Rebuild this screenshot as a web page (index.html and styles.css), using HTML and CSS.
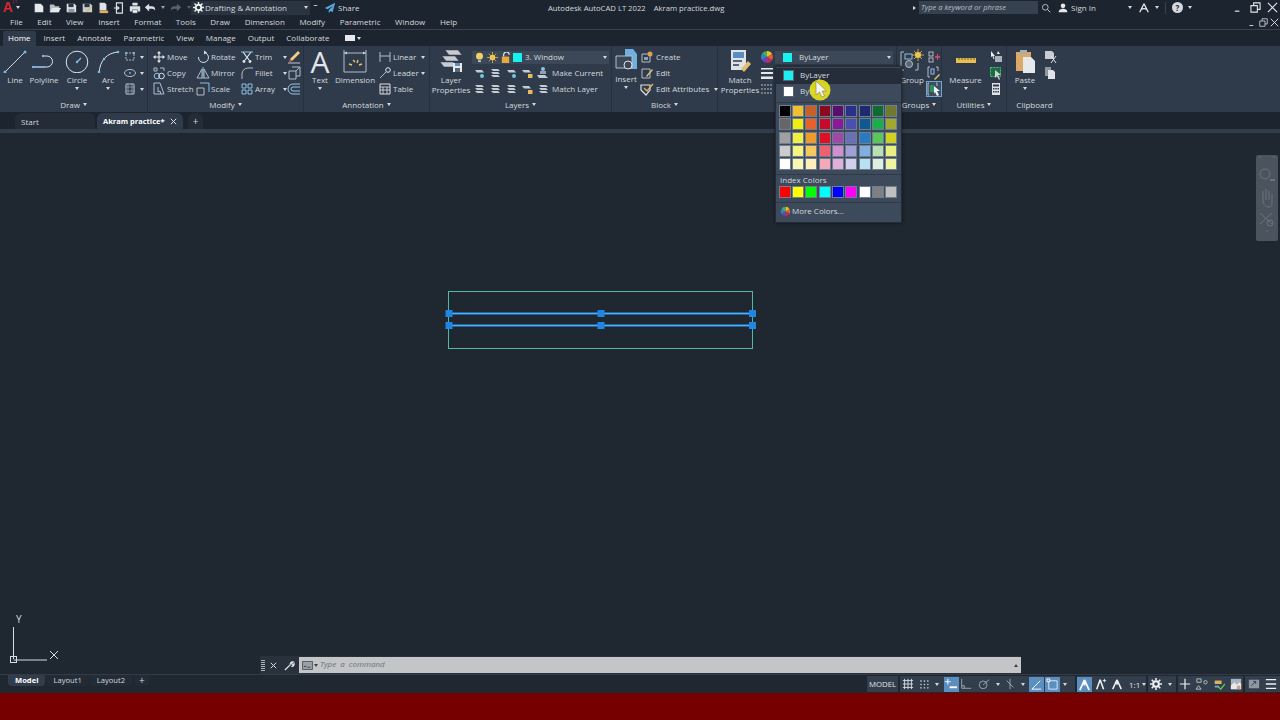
FILE: index.html
```html
<!DOCTYPE html>
<html lang="en">
<head>
<meta charset="utf-8">
<title>Autodesk AutoCAD LT 2022</title>
<link rel="stylesheet" href="styles.css">
</head>
<body>
<svg class="defs" width="0" height="0" aria-hidden="true">
  <symbol id="dot3" viewBox="0 0 14 14"><path d="M3 3h8v7H3z" fill="none" stroke="#aab2bc" stroke-dasharray="2 1"/><path d="M2 2h2v2H2zM10 2h2v2h-2z" fill="#6fb0e0"/></symbol>
  <symbol id="ellipse" viewBox="0 0 14 14"><ellipse cx="7" cy="7" rx="5.500" ry="3.500" fill="none" stroke="#b5bcc4"/><circle cx="7" cy="7" r="1" fill="#6fb0e0"/></symbol>
  <symbol id="hatch" viewBox="0 0 14 14"><path d="M3 2h8v10H3z" fill="none" stroke="#b5bcc4"/><path d="M5 1v12M9 1v12M2 5h10M2 9h10" stroke="#98a1ac" stroke-width=".8"/></symbol>
  <symbol id="move" viewBox="0 0 14 14"><path d="M7 2v10M2 7h10" stroke="#e6e9ec" stroke-width="1.100"/><path d="M7 1l2 2.500H5zM7 13l2-2.500H5zM1 7l2.500-2v4zM13 7l-2.500-2v4z" fill="#e6e9ec"/></symbol>
  <symbol id="copy" viewBox="0 0 14 14"><circle cx="5" cy="10" r="2.800" fill="none" stroke="#8fc0e8"/><circle cx="9.500" cy="10" r="2.800" fill="none" stroke="#d8dde2"/><path d="M2 2h3v3H2zM8 2h4v3" fill="none" stroke="#b5bcc4"/></symbol>
  <symbol id="stretch" viewBox="0 0 14 14"><path d="M2 1h6l4 11H2z" fill="none" stroke="#b5bcc4"/><path d="M6 5v5l2-1 1 3" fill="none" stroke="#8fc0e8"/></symbol>
  <symbol id="rotate" viewBox="0 0 14 14"><path d="M8 2.500a5 5 0 1 1-5.500 4.500" fill="none" stroke="#d8dde2"/><path d="M8 .5l3 2-3 2z" fill="#d8dde2"/></symbol>
  <symbol id="mirror" viewBox="0 0 14 14"><path d="M6 3L1 12h5zM8 3l5 9H8z" fill="none" stroke="#b5bcc4"/><path d="M7 1v12" stroke="#8fc0e8"/></symbol>
  <symbol id="scale" viewBox="0 0 14 14"><path d="M1 6h7v7H1z" fill="none" stroke="#b5bcc4"/><path d="M4 1h9v9" fill="none" stroke="#8fc0e8"/></symbol>
  <symbol id="trim" viewBox="0 0 14 14"><path d="M3 2l6 8M11 2L5 10" stroke="#e6e9ec" stroke-width="1.200"/><circle cx="4" cy="11.500" r="1.400" fill="#e6e9ec"/><circle cx="10" cy="11.500" r="1.400" fill="#e6e9ec"/><path d="M1 2h12" stroke="#8fc0e8"/></symbol>
  <symbol id="fillet" viewBox="0 0 14 14"><path d="M2 13V8a6 6 0 0 1 6-6h5" fill="none" stroke="#b5bcc4"/></symbol>
  <symbol id="array" viewBox="0 0 14 14"><path d="M2 2h4v4H2zM8 2h4v4H8zM2 8h4v4H2zM8 8h4v4H8z" fill="none" stroke="#8fc0e8"/></symbol>
  <symbol id="erase" viewBox="0 0 14 14"><path d="M3 9l8-8 2 2-8 8z" fill="#f0d080"/><path d="M3 9l2 2-3 1z" fill="#e06060"/><path d="M1 13h12" stroke="#c8c8c8"/></symbol>
  <symbol id="explode" viewBox="0 0 14 14"><path d="M2 5h7v8H2zM5 1h8v9h-4" fill="none" stroke="#b5bcc4"/><path d="M9 5l4-4" stroke="#8fc0e8"/></symbol>
  <symbol id="offset" viewBox="0 0 14 14"><path d="M13 2H6a5 5 0 0 0 0 10h7M13 5H6a2 2 0 0 0 0 4h7" fill="none" stroke="#9ac4e6"/></symbol>
  <symbol id="linear" viewBox="0 0 14 14"><path d="M2 2v10M12 2v10M2 6h10" fill="none" stroke="#b5bcc4"/></symbol>
  <symbol id="leader" viewBox="0 0 14 14"><path d="M2 12l6-6" stroke="#b5bcc4"/><circle cx="10" cy="4" r="2.300" fill="none" stroke="#e6e9ec"/></symbol>
  <symbol id="table" viewBox="0 0 14 14"><path d="M2 2h10v10H2z" fill="none" stroke="#dfe3e8"/><path d="M2 5h10M2 8h10M5 5v7M9 5v7" stroke="#dfe3e8" stroke-width=".8"/></symbol>
  <symbol id="lyr-a" viewBox="0 0 14 14"><path d="M3 4h7l2 2.500H5z" fill="#c5cbd2"/><circle cx="10" cy="10" r="2" fill="#6fc8e0"/></symbol>
  <symbol id="lyr-b" viewBox="0 0 14 14"><path d="M3 3h7l2 2H5zM3 6h7l2 2H5zM3 9h7l2 2H5z" fill="#c5cbd2"/></symbol>
  <symbol id="lyr-c" viewBox="0 0 14 14"><path d="M2 4h7l2 2.500H4z" fill="#c5cbd2"/><rect x="8" y="8" width="4.500" height="4" fill="#e8b860"/></symbol>
  <symbol id="lyr-d" viewBox="0 0 14 14"><path d="M1 9h8l3 3H3z" fill="#c5cbd2"/><circle cx="7" cy="3" r="2" fill="#8fc0e8"/><path d="M4 5h6v3H4z" fill="#8fa0b4"/></symbol>
  <symbol id="create" viewBox="0 0 14 14"><path d="M2 4h8v8H2z" fill="none" stroke="#b5bcc4"/><circle cx="10" cy="4" r="2.500" fill="#e0a050"/><path d="M4 7h4v3H4z" fill="#8fa0b4"/></symbol>
  <symbol id="edit" viewBox="0 0 14 14"><path d="M2 3h8v9H2z" fill="none" stroke="#b5bcc4"/><path d="M6 10l6-7 1 1-6 7z" fill="#e0c070"/></symbol>
  <symbol id="attr" viewBox="0 0 14 14"><path d="M1 3h9v5l-4 5-5-5z" fill="none" stroke="#dfe3e8" stroke-width="1.200"/><path d="M4 6l3 3 6-7" fill="none" stroke="#e0b060" stroke-width="1.400"/></symbol>
  <symbol id="wheel" viewBox="0 0 14 14"><path d="M7 7V1a6 6 0 0 1 5.200 3z" fill="#e8c030"/><path d="M7 7l5.200-3a6 6 0 0 1 0 6z" fill="#e06030"/><path d="M7 7l5.200 3A6 6 0 0 1 7 13z" fill="#c02a60"/><path d="M7 7v6a6 6 0 0 1-5.200-3z" fill="#7040b0"/><path d="M7 7L1.800 10a6 6 0 0 1 0-6z" fill="#3080d0"/><path d="M7 7L1.800 4A6 6 0 0 1 7 1z" fill="#40b060"/></symbol>
  <symbol id="lweight" viewBox="0 0 14 14"><path d="M1 2h12v1.500H1zM1 6h12v2H1zM1 10.500h12V13H1z" fill="#e6e9ec"/></symbol>
  <symbol id="ltype" viewBox="0 0 14 14"><path d="M1 3h12M1 7h12M1 11h12" stroke="#b5bcc4" stroke-dasharray="2 1"/></symbol>
  <symbol id="grp-a" viewBox="0 0 14 14"><rect x="2" y="2" width="4" height="4" fill="none" stroke="#b5bcc4"/><rect x="2" y="8" width="4" height="4" fill="none" stroke="#b5bcc4"/><path d="M8 7h5" stroke="#e05070" stroke-width="1.500"/><path d="M10.500 4v6" stroke="#e05070"/></symbol>
  <symbol id="grp-b" viewBox="0 0 14 14"><path d="M3 1H1v10h2M9 1h2v4" fill="none" stroke="#b5bcc4"/><rect x="4" y="3" width="3" height="5" fill="none" stroke="#8fc0e8"/><path d="M7 13l5-5 1 1-5 5z" fill="#e0c070"/></symbol>
  <symbol id="grp-c" viewBox="0 0 14 14"><path d="M2 1H1v12h1M9 1h1v3" fill="none" stroke="#b5bcc4"/><rect x="3" y="3" width="4" height="7" fill="#2a9060"/><path d="M7 4l6 5-3 0 2 4-2 1-2-4-1 2z" fill="#eef0f2"/></symbol>
  <symbol id="util-a" viewBox="0 0 14 14"><path d="M2 1l4 5H4.500l1 3h-1l-1-3-1.500 1z" fill="#eef0f2"/><path d="M6 6h7v6H6z" fill="#aab2bc"/><path d="M9 1l2 3H8z" fill="#eef0f2"/></symbol>
  <symbol id="util-b" viewBox="0 0 14 14"><rect x="1.500" y="1.500" width="10" height="9" fill="#1d6b40" stroke="#50c080" stroke-dasharray="2 1"/><path d="M6 4l6 5-3 0 2 4-1 1-2-4-2 2z" fill="#cfd4da"/></symbol>
  <symbol id="calc" viewBox="0 0 14 14"><rect x="3" y="1" width="8" height="12" fill="#dfe3e8"/><rect x="4" y="2.500" width="6" height="2" fill="#2f3b4a"/><path d="M4 6h1.500v1.500H4zM6.300 6h1.500v1.500H6.300zM8.500 6H10v1.500H8.500zM4 9h1.500v1.500H4zM6.300 9h1.500v1.500H6.300zM8.500 9H10v1.500H8.500z" fill="#2f3b4a"/></symbol>
  <symbol id="cut" viewBox="0 0 14 14"><path d="M2 1h7l2 2v6H2z" fill="#c8ccd2"/><path d="M8 6l5 7M13 6l-5 7" stroke="#dfe3e8"/></symbol>
  <symbol id="pcopy" viewBox="0 0 14 14"><path d="M2 1h6v9H2z" fill="#8f98a2"/><path d="M5 4h5l2 2v7H5z" fill="#dfe3e8"/></symbol>
</svg>

<div class="app">
  <header class="titlebar">
    <div class="tb-left">
      <span class="logo">A<i class="logo-lt">LT</i></span>
      <span class="caret logo-caret"></span>
      <div class="qat">
        <svg viewBox="0 0 14 14"><path d="M2 2h7l3 3v7H2z" fill="#e6e9ec"/></svg>
        <svg viewBox="0 0 14 14"><path d="M1 3h5l1 2h5v7H1z" fill="#b8bec6"/><path d="M4 7h10l-3 5H1z" fill="#e6e9ec"/></svg>
        <svg viewBox="0 0 14 14"><path d="M2 2h9l2 2v8H2z" fill="#dfe3e8"/><path d="M4 2h6v4H4z" fill="#2a3441"/><path d="M4 8h7v4H4z" fill="#8f98a2"/></svg>
        <svg viewBox="0 0 14 14"><path d="M2 2h9l2 2v8H2z" fill="#c8ccd2"/><path d="M4 2h6v4H4z" fill="#2a3441"/><path d="M6 11l6-6 1 1-6 6z" fill="#e0b060"/></svg>
        <svg viewBox="0 0 14 14"><path d="M3 1h6l2 2v7H3z" fill="#dfe3e8"/><path d="M3 10h10v3H3z" fill="#e0b060"/></svg>
        <svg viewBox="0 0 14 14"><path d="M4 1h7v12H4z" fill="none" stroke="#dfe3e8" stroke-width="1.300"/><path d="M1 7h6M5 5l2 2-2 2" fill="none" stroke="#dfe3e8" stroke-width="1.300"/></svg>
        <svg viewBox="0 0 14 14"><path d="M4 1h6v3H4zM1 5h12v6H1z" fill="#dfe3e8"/><path d="M4 9h6v4H4z" fill="#eef0f2" stroke="#2a3441" stroke-width=".6"/></svg>
      </div>
      <svg class="undo" viewBox="0 0 14 14"><path d="M1 6l5-4v3h3a4 4 0 0 1 4 4v1a4 3 0 0 0-4-2H6v3z" fill="#dfe3e8"/></svg>
      <span class="caret undo-caret"></span>
      <svg class="redo" viewBox="0 0 14 14"><path d="M13 6L8 2v3H5a4 4 0 0 0-4 4v1a4 3 0 0 1 4-2h3v3z" fill="#59616c"/></svg>
      <span class="caret redo-caret"></span>
      <div class="workspace">
        <svg class="gear" viewBox="0 0 14 14"><circle cx="7" cy="7" r="3.500" fill="none" stroke="#eef0f2" stroke-width="2.400"/><path d="M7 0v3M7 11v3M0 7h3M11 7h3M2 2l2 2M10 10l2 2M12 2l-2 2M4 10l-2 2" stroke="#eef0f2" stroke-width="1.800"/></svg>
        <span class="ws-label">Drafting &amp; Annotation</span>
        <span class="caret ws-caret"></span>
      </div>
      <span class="menu-caret"></span>
      <svg class="share" viewBox="0 0 14 14"><path d="M13 1L1 7l3 1.500L11 4 5.500 9.500V13l2-2.500L10 12z" fill="#59a9e0"/></svg>
      <span class="share-label">Share</span>
    </div>
    <div class="app-title">Autodesk AutoCAD LT 2022&nbsp;&nbsp;&nbsp;&nbsp;Akram practice.dwg</div>
    <div class="tb-right">
      <span class="tri-right"></span>
      <div class="search">Type a keyword or phrase</div>
      <svg class="tb-icon" viewBox="0 0 14 14"><circle cx="6" cy="6" r="4" fill="none" stroke="#c5cbd2" stroke-width="1.200"/><path d="M9 9l4 4" stroke="#c5cbd2" stroke-width="1.400"/></svg>
      <svg class="tb-icon user" viewBox="0 0 14 14"><circle cx="7" cy="4" r="3.200" fill="#e6e9ec"/><path d="M1 13c0-4 3-5 6-5s6 1 6 5z" fill="#e6e9ec"/></svg>
      <span class="signin">Sign In</span>
      <span class="caret signin-caret"></span>
      <svg class="tb-icon a360" viewBox="0 0 14 14"><path d="M7 1L1 13M7 1l6 12M3 9c3-1.500 5-1.500 8 0" fill="none" stroke="#e6e9ec" stroke-width="1.800"/></svg>
      <span class="caret"></span>
      <span class="tb-sep"></span>
      <span class="help">?</span>
      <span class="caret help-caret"></span>
      <div class="win-btns">
        <svg viewBox="0 0 12 12"><path d="M2 10h5" stroke="#dfe3e8" stroke-width="1.300"/></svg>
        <svg viewBox="0 0 12 12"><path d="M1 4h7v7H1zM4 4V1h7v7H8" fill="none" stroke="#dfe3e8" stroke-width="1.200"/></svg>
        <svg viewBox="0 0 12 12"><path d="M1 1l10 10M11 1L1 11" stroke="#e6e9ec" stroke-width="1.200"/></svg>
      </div>
    </div>
  </header>

  <nav class="menubar">
    <div class="menu-items">
      <span>File</span><span>Edit</span><span>View</span><span>Insert</span><span>Format</span><span>Tools</span><span>Draw</span><span>Dimension</span><span>Modify</span><span>Parametric</span><span>Window</span><span>Help</span>
    </div>
    <div class="doc-btns">
      <svg viewBox="0 0 12 12"><path d="M2 10h5" stroke="#dfe3e8" stroke-width="1.200"/></svg>
      <svg viewBox="0 0 12 12"><path d="M1 4h7v7H1zM4 4V1h7v7H8" fill="none" stroke="#dfe3e8"/></svg>
      <svg viewBox="0 0 12 12"><path d="M1 1l10 10M11 1L1 11" stroke="#e6e9ec" stroke-width="1.200"/></svg>
    </div>
  </nav>

  <div class="ribbon-tabs">
    <span class="rtab active">Home</span><span class="rtab">Insert</span><span class="rtab">Annotate</span><span class="rtab">Parametric</span><span class="rtab">View</span><span class="rtab">Manage</span><span class="rtab">Output</span><span class="rtab">Collaborate</span>
    <span class="mini"></span><span class="caret mini-caret"></span>
  </div>

  <section class="ribbon">
    <!-- Draw -->
    <div class="panel p-draw">
      <div class="tools">
        <div class="big w30"><svg viewBox="0 0 24 24"><path d="M2 23L22 3" stroke="#cfd4da"/><circle cx="2" cy="23" r="1.500" fill="#7fb8e6"/><circle cx="22" cy="3" r="1.500" fill="#7fb8e6"/></svg><span>Line</span></div>
        <div class="big w28"><svg viewBox="0 0 24 24"><path d="M1 18h14a5.500 5.500 0 0 0 0-11h-4" fill="none" stroke="#dfe3e8"/><path d="M1 18h12" stroke="#7fb8e6" stroke-width="1.400"/><circle cx="1" cy="18" r="1.200" fill="#7fb8e6"/><circle cx="11" cy="7" r="1.200" fill="#7fb8e6"/></svg><span>Polyline</span></div>
        <div class="big w38"><svg viewBox="0 0 24 24"><circle cx="12" cy="13" r="10.800" fill="none" stroke="#dfe3e8"/><path d="M12 13l4-4" stroke="#7fb8e6" stroke-width="1.400"/><circle cx="12" cy="13" r="1.200" fill="#7fb8e6"/></svg><span>Circle</span><span class="caret down"></span></div>
        <div class="big w24"><svg viewBox="0 0 24 24"><path d="M3 24C4 11 11 4 22 3" fill="none" stroke="#dfe3e8"/><circle cx="3" cy="23" r="1.300" fill="#7fb8e6"/><circle cx="8" cy="10" r="1.300" fill="#7fb8e6"/><circle cx="22" cy="3" r="1.300" fill="#7fb8e6"/></svg><span>Arc</span><span class="caret down"></span></div>
        <div class="col c-draw">
          <div class="row"><svg class="ico"><use href="#dot3"/></svg><span class="caret tight"></span></div>
          <div class="row"><svg class="ico"><use href="#ellipse"/></svg><span class="caret tight"></span></div>
          <div class="row"><svg class="ico"><use href="#hatch"/></svg><span class="caret tight"></span></div>
        </div>
      </div>
      <div class="ptitle">Draw<span class="caret"></span></div>
    </div>
    <!-- Modify -->
    <div class="panel p-modify">
      <div class="tools">
        <div class="col w44">
          <div class="row"><svg class="ico"><use href="#move"/></svg><span>Move</span></div>
          <div class="row"><svg class="ico"><use href="#copy"/></svg><span>Copy</span></div>
          <div class="row"><svg class="ico"><use href="#stretch"/></svg><span>Stretch</span></div>
        </div>
        <div class="col w44">
          <div class="row"><svg class="ico"><use href="#rotate"/></svg><span>Rotate</span></div>
          <div class="row"><svg class="ico"><use href="#mirror"/></svg><span>Mirror</span></div>
          <div class="row"><svg class="ico"><use href="#scale"/></svg><span>Scale</span></div>
        </div>
        <div class="col w47">
          <div class="row"><svg class="ico"><use href="#trim"/></svg><span>Trim</span><span class="caret push"></span></div>
          <div class="row"><svg class="ico"><use href="#fillet"/></svg><span>Fillet</span><span class="caret push"></span></div>
          <div class="row"><svg class="ico"><use href="#array"/></svg><span>Array</span><span class="caret push"></span></div>
        </div>
        <div class="col">
          <div class="row"><svg class="ico"><use href="#erase"/></svg></div>
          <div class="row"><svg class="ico"><use href="#explode"/></svg></div>
          <div class="row"><svg class="ico"><use href="#offset"/></svg></div>
        </div>
      </div>
      <div class="ptitle">Modify<span class="caret"></span></div>
    </div>
    <!-- Annotation -->
    <div class="panel p-annot">
      <div class="tools">
        <div class="big w32"><span class="glyph-a">A</span><span>Text</span><span class="caret down"></span></div>
        <div class="big w38"><svg viewBox="0 0 24 24"><path d="M1 1v22M23 1v22M1 4h22M1 23h22" fill="none" stroke="#b5bcc4"/><path d="M1 4l3-1.500v3zM23 4l-3-1.500v3z" fill="#c5cbd2"/><path d="M6 15l3 1M10 11l2 2M15 11l-1 3M19 15l-3 1" stroke="#e8c860" stroke-width="1.400"/></svg><span>Dimension</span></div>
        <div class="col c-annot">
          <div class="row"><svg class="ico"><use href="#linear"/></svg><span>Linear</span><span class="caret push"></span></div>
          <div class="row"><svg class="ico"><use href="#leader"/></svg><span>Leader</span><span class="caret push"></span></div>
          <div class="row"><svg class="ico"><use href="#table"/></svg><span>Table</span></div>
        </div>
      </div>
      <div class="ptitle">Annotation<span class="caret"></span></div>
    </div>
    <!-- Layers -->
    <div class="panel p-layers">
      <div class="tools">
        <div class="big w42"><svg viewBox="0 0 24 24"><path d="M6 1h13l4 5H10zM3 7h13l4 5H7zM1 13h13l4 5H5z" fill="#c8ccd2" stroke="#2f3b4a" stroke-width=".5"/><path d="M14 14h9v9h-9z" fill="#e6e9ec"/><path d="M16 14h5v3h-5z" fill="#5a8ec0"/><path d="M16 19h5v4h-5z" fill="#5a6472"/></svg><span>Layer<br>Properties</span></div>
        <div class="col c-layers">
          <div class="row combo layer-combo">
            <svg class="ico-s" viewBox="0 0 12 12"><circle cx="6" cy="4.500" r="3.800" fill="#f0d060"/><path d="M4.500 9h3v2h-3z" fill="#c8ccd2"/></svg>
            <svg class="ico-s" viewBox="0 0 12 12"><circle cx="6" cy="6" r="3" fill="#f0d060"/><path d="M6 0v12M0 6h12M2 2l8 8M10 2l-8 8" stroke="#f0c040" stroke-width=".8"/></svg>
            <svg class="ico-s" viewBox="0 0 12 12"><path d="M2 5h8v7H2z" fill="#e8a840"/><path d="M4 5V3a3 3 0 0 1 6 0" fill="none" stroke="#e6e9ec" stroke-width="1.300"/></svg>
            <span class="swatch cyan"></span>
            <span class="combo-label">3. Window</span>
            <span class="caret push"></span>
          </div>
          <div class="row layer-row">
            <svg class="ico"><use href="#lyr-a"/></svg><svg class="ico"><use href="#lyr-b"/></svg><svg class="ico"><use href="#lyr-a"/></svg><svg class="ico"><use href="#lyr-c"/></svg><svg class="ico"><use href="#lyr-d"/></svg>
            <span class="lr-label">Make Current</span>
          </div>
          <div class="row layer-row">
            <svg class="ico"><use href="#lyr-b"/></svg><svg class="ico"><use href="#lyr-b"/></svg><svg class="ico"><use href="#lyr-b"/></svg><svg class="ico"><use href="#lyr-c"/></svg><svg class="ico"><use href="#lyr-b"/></svg>
            <span class="lr-label">Match Layer</span>
          </div>
        </div>
      </div>
      <div class="ptitle">Layers<span class="caret"></span></div>
    </div>
    <!-- Block -->
    <div class="panel p-block">
      <div class="tools">
        <div class="big w28 insert"><svg viewBox="0 0 24 24"><path d="M11 0h8l4 5v15H11z" fill="#6fb0e0"/><path d="M2 7h16v12H2z" fill="#3a4756" stroke="#b5bcc4"/><circle cx="14" cy="16" r="4" fill="#3a4756" stroke="#dfe3e8"/></svg><span>Insert</span><span class="caret down"></span></div>
        <div class="col">
          <div class="row"><svg class="ico"><use href="#create"/></svg><span class="bl">Create</span></div>
          <div class="row"><svg class="ico"><use href="#edit"/></svg><span class="bl">Edit</span></div>
          <div class="row"><svg class="ico"><use href="#attr"/></svg><span class="bl">Edit Attributes</span><span class="caret attr-caret"></span></div>
        </div>
      </div>
      <div class="ptitle">Block<span class="caret"></span></div>
    </div>
    <!-- Properties -->
    <div class="panel p-props">
      <div class="tools">
        <div class="big w44"><svg viewBox="0 0 24 24"><path d="M3 1h15v20H3z" fill="#dfe3e8"/><path d="M5 3h11v6H5z" fill="#5a8ec0"/><path d="M5 11h9v2H5zM5 15h6v2H5z" fill="#5a6472"/><path d="M13 20l7-8 3 3-7 8z" fill="#e0c070"/></svg><span>Match<br>Properties</span></div>
        <div class="col c-wheel">
          <div class="row"><svg class="ico"><use href="#wheel"/></svg></div>
          <div class="row"><svg class="ico"><use href="#lweight"/></svg></div>
          <div class="row"><svg class="ico"><use href="#ltype"/></svg></div>
        </div>
        <div class="col c-propcombo">
          <div class="row combo color-combo"><span class="swatch cyan"></span><span class="combo-text">ByLayer</span><span class="caret push"></span></div>
        </div>
      </div>
      <div class="ptitle">Properties<span class="caret"></span></div>
    </div>
    <!-- Groups -->
    <div class="panel p-groups">
      <div class="tools">
        <div class="big w26"><svg viewBox="0 0 24 24"><path d="M4 3H1v18h3M18 14v7h-3" fill="none" stroke="#b5bcc4"/><rect x="5" y="5" width="7" height="5" fill="none" stroke="#8fc0e8"/><circle cx="9" cy="15" r="3.500" fill="#5a6472" stroke="#b5bcc4"/><circle cx="18" cy="6" r="3" fill="#f0d060"/><path d="M18 0v12M12 6h12M14 2l8 8M22 2l-8 8" stroke="#f0c040" stroke-width=".8"/></svg><span>Group</span></div>
        <div class="col c-grp">
          <div class="row"><svg class="ico"><use href="#grp-a"/></svg></div>
          <div class="row"><svg class="ico"><use href="#grp-b"/></svg></div>
          <div class="row"><span class="grp-active"><svg class="ico"><use href="#grp-c"/></svg></span></div>
        </div>
      </div>
      <div class="ptitle">Groups<span class="caret"></span></div>
    </div>
    <!-- Utilities -->
    <div class="panel p-util">
      <div class="tools">
        <div class="big w47"><svg viewBox="0 0 24 24"><path d="M2 9h20v5H2z" fill="#e8c050"/><path d="M5 9v2M8 9v2M11 9v2M14 9v2M17 9v2M20 9v2" stroke="#5a4a20" stroke-width=".8"/></svg><span>Measure</span><span class="caret down"></span></div>
        <div class="col">
          <div class="row"><svg class="ico"><use href="#util-a"/></svg></div>
          <div class="row"><svg class="ico"><use href="#util-b"/></svg></div>
          <div class="row"><svg class="ico"><use href="#calc"/></svg></div>
        </div>
      </div>
      <div class="ptitle">Utilities<span class="caret"></span></div>
    </div>
    <!-- Clipboard -->
    <div class="panel p-clip">
      <div class="tools">
        <div class="big w36"><svg viewBox="0 0 24 24"><path d="M3 3h15v19H3z" fill="#dca868"/><path d="M7 1h7v4H7z" fill="#a8aeb6"/><path d="M10 8h8l4 4v12H10z" fill="#e6e9ec"/></svg><span>Paste</span><span class="caret down"></span></div>
        <div class="col">
          <div class="row"><svg class="ico"><use href="#cut"/></svg></div>
          <div class="row"><svg class="ico"><use href="#pcopy"/></svg></div>
        </div>
      </div>
      <div class="ptitle plain">Clipboard</div>
    </div>
  </section>

  <div class="doc-tabs">
    <span class="dtab start">Start</span>
    <span class="dtab current">Akram practice*<svg class="dclose" viewBox="0 0 10 10"><path d="M2 2l6 6M8 2L2 8" stroke="#dfe3e8" stroke-width="1.100"/></svg></span>
    <span class="dtab plus">+</span>
  </div>

  <main class="canvas"></main>

  <footer class="statusbar">
    <div class="layouts">
      <span class="ltab on">Model</span><span class="ltab">Layout1</span><span class="ltab">Layout2</span><span class="ltab add">+</span>
    </div>
    <div class="status">
      <div class="sgroup sg-model">MODEL</div>
      <div class="sgroup sg-draft">
        <svg class="si" viewBox="0 0 14 14"><path d="M3 1v12M7 1v12M11 1v12M1 3h12M1 7h12M1 11h12" stroke="#dfe3e8"/></svg>
        <svg class="si s-dots" viewBox="0 0 14 14"><path d="M3 3h1v1H3zM7 3h1v1H7zM11 3h1v1h-1zM3 7h1v1H3zM7 7h1v1H7zM11 7h1v1h-1zM3 11h1v1H3zM7 11h1v1H7zM11 11h1v1h-1z" fill="#dfe3e8" stroke="#dfe3e8" stroke-width=".5"/></svg>
        <span class="caret s-c1"></span>
        <svg class="si on s-snap" viewBox="0 0 14 14"><path d="M3 1v6M0 4h6" stroke="#fff"/><path d="M5 9h8v2H5z" fill="#fff"/></svg>
        <svg class="si" viewBox="0 0 14 14"><path d="M2 1v11h11M5 12V9H2" fill="none" stroke="#a8aeb6"/></svg>
        <svg class="si s-polar" viewBox="0 0 14 14"><circle cx="6" cy="8" r="4.500" fill="none" stroke="#a8aeb6"/><path d="M6 8l7-6" stroke="#a8aeb6"/></svg>
        <span class="caret s-c2"></span>
        <svg class="si s-iso" viewBox="0 0 14 14"><path d="M7 1v12M3 3l8 8" stroke="#a8aeb6"/></svg>
        <span class="caret s-c3"></span>
        <svg class="si on s-osn" viewBox="0 0 14 14"><path d="M2 12h10M2 12l9-9" stroke="#fff"/></svg>
        <svg class="si on s-trk" viewBox="0 0 14 14"><path d="M3 3h9v9H3z" fill="none" stroke="#dfe9f2"/><path d="M1 1h3v3H1z" fill="#5b8fc0" stroke="#fff"/></svg>
        <span class="caret s-c4"></span>
      </div>
      <div class="sgroup sg-annot">
        <svg class="si on" viewBox="0 0 14 14"><path d="M7 2L2 13M7 2l5 11M7 2v6" stroke="#fff" stroke-width="1.800"/></svg>
        <svg class="si" viewBox="0 0 14 14"><path d="M6 2L2 13M6 2l4 11" stroke="#eef0f2" stroke-width="1.800"/><path d="M11 1v4M9 3h4" stroke="#eef0f2"/></svg>
        <svg class="si" viewBox="0 0 14 14"><path d="M7 2L2 13M7 2l5 11M7 2v6" stroke="#eef0f2" stroke-width="1.800"/></svg>
        <span class="ratio">1:1</span><span class="caret"></span>
      </div>
      <div class="sgroup sg-gear">
        <svg class="si" viewBox="0 0 14 14"><circle cx="7" cy="7" r="3.300" fill="none" stroke="#eef0f2" stroke-width="2.400"/><path d="M7 0v3M7 11v3M0 7h3M11 7h3M2 2l2 2M10 10l2 2M12 2l-2 2M4 10l-2 2" stroke="#eef0f2" stroke-width="1.800"/></svg>
        <span class="caret s-c5"></span>
      </div>
      <div class="sgroup sg-tools">
        <svg class="si" viewBox="0 0 14 14"><path d="M7 1v12M1 7h12" stroke="#eef0f2" stroke-width="1.400"/></svg>
        <svg class="si" viewBox="0 0 14 14"><path d="M1 1h5v4H1z" fill="none" stroke="#c5cbd2"/><circle cx="11" cy="5" r="2" fill="none" stroke="#c5cbd2"/><path d="M3 9l3 4H0z" fill="none" stroke="#c5cbd2"/></svg>
        <svg class="si" viewBox="0 0 14 14"><path d="M2 3h8v4H2z" fill="#e0b060"/><path d="M2 10h5" stroke="#6fb0e0" stroke-width="2"/><path d="M6 10l3 3 5-6" fill="none" stroke="#58c858" stroke-width="1.600"/></svg>
        <svg class="si" viewBox="0 0 14 14"><path d="M1 1h12v12H1z" fill="#aab2bc"/><path d="M1 9l4-4 3 3 3-3 2 2v6H1z" fill="#e6e9ec"/><path d="M8 9h4v4H8z" fill="#d89a7a"/></svg>
      </div>
      <div class="sgroup sg-end">
        <svg class="si" viewBox="0 0 14 14"><path d="M1 2h12v10H1z" fill="#8f98a2"/><path d="M4 9l5-5M6 4h3v3" fill="none" stroke="#2f3b4a"/></svg>
        <svg class="si" viewBox="0 0 14 14"><path d="M1 2h12M1 7h12M1 12h12" stroke="#eef0f2" stroke-width="1.500"/></svg>
      </div>
    </div>
  </footer>
  <div class="deadbar"></div>

  <!-- items placed on the drawing canvas -->
  <svg class="drawing" viewBox="0 0 320 72">
    <rect x="8.500" y="3.500" width="304" height="57" fill="none" stroke="#4fb8a8" stroke-width="1"/>
    <path d="M9 25.500h304M9 37.500h304" stroke="#0e4f8a" stroke-width="3"/>
    <path d="M9 25.500h304M9 37.500h304" stroke="#58aeea" stroke-width="1.400"/>
    <path d="M5.500 22h7v7h-7zM157.500 22h7v7h-7zM309 22h7v7h-7zM5.500 34h7v7h-7zM157.500 34h7v7h-7zM309 34h7v7h-7z" fill="#1f86e6"/>
  </svg>

  <div class="ucs">
    <svg viewBox="0 0 60 50"><path d="M3.500 7v32M3.500 40H37" stroke="#d8dde2" fill="none"/><rect x="0.500" y="36.500" width="6" height="6" fill="none" stroke="#d8dde2"/><path d="M40 31l8 8M48 31l-8 8" stroke="#d8dde2"/></svg>
    <span class="ucs-y">Y</span>
  </div>

  <aside class="navbar">
    <svg viewBox="0 0 22 86"><path d="M3 2h2M17 2h2" stroke="#6a737e"/><circle cx="9" cy="19" r="5" fill="none" stroke="#6a737e"/><path d="M14 24h5v2h-5z" fill="#6a737e"/><path d="M7 45v-9M10 45v-11M13 45v-9M16 46v-7M7 45c0 5 3 7 6 7s3-2 3-6" fill="none" stroke="#6a737e"/><path d="M4 58l12 11M16 58L4 69" stroke="#6a737e"/><circle cx="14" cy="68" r="3" fill="none" stroke="#6a737e"/><path d="M10 76h2" stroke="#6a737e"/></svg>
  </aside>

  <div class="cmd">
    <span class="cmd-grip"></span>
    <svg class="cmd-x" viewBox="0 0 10 10"><path d="M2 2l6 6M8 2L2 8" stroke="#dfe3e8" stroke-width="1.100"/></svg>
    <svg class="cmd-wrench" viewBox="0 0 12 12"><path d="M1 11l6-6M7 5a2.500 2.500 0 0 1 3-3L8.500 3.500 9 5l1 .5L11 4a2.500 2.500 0 0 1-3 3" fill="none" stroke="#dfe3e8" stroke-width="1.400"/></svg>
    <div class="cmd-input">
      <svg class="cmd-prompt" viewBox="0 0 12 10"><path d="M.5.500h11v9H.5z" fill="#9aa0a6" stroke="#4a525c"/><path d="M2 6h3M6 7h3" stroke="#3a424c"/></svg>
      <span class="cmd-caret"></span>
      <span class="cmd-text">Type a command</span>
      <span class="cmd-up"></span>
    </div>
  </div>

  <div class="dropdown">
    <div class="dd-list">
      <div class="dd-item sel"><span class="swatch big-s cyan"></span><span class="dd-name">ByLayer</span></div>
      <div class="dd-item"><span class="swatch big-s white"></span><span class="dd-name">ByBlock</span></div>
    </div>
    <div class="palette">
      <span></span><span></span><span></span><span></span><span></span><span></span><span></span><span></span><span></span>
      <span></span><span></span><span></span><span></span><span></span><span></span><span></span><span></span><span></span>
      <span></span><span></span><span></span><span></span><span></span><span></span><span></span><span></span><span></span>
      <span></span><span></span><span></span><span></span><span></span><span></span><span></span><span></span><span></span>
      <span></span><span></span><span></span><span></span><span></span><span></span><span></span><span></span><span></span>
    </div>
    <div class="dd-section">
      <div class="dd-label">Index Colors</div>
      <div class="palette index">
        <span></span><span></span><span></span><span></span><span></span><span></span><span></span><span></span><span></span>
      </div>
    </div>
    <div class="dd-more"><svg class="ico-s" viewBox="0 0 14 14"><use href="#wheel"/></svg><span>More Colors...</span></div>
  </div>

  <div class="pointer">
    <svg viewBox="0 0 22 22"><circle cx="11" cy="11" r="10.500" fill="#e6e01e" opacity=".92"/><path d="M7 2v14l3.500-3 2.500 5 2.500-1-2.500-5h4.500z" fill="#f2f4f6" stroke="#6a6a40" stroke-width=".5"/></svg>
  </div>
</div>
</body>
</html>
```

FILE: styles.css
```css
* { box-sizing: border-box; }
html, body { margin: 0; padding: 0; }
body {
  width: 1280px;
  height: 720px;
  overflow: hidden;
  background: #1f2730;
  font-family: "Open Sans", "Noto Sans", sans-serif;
  font-size: 8px;
  color: #d5d9de;
}
.defs { position: absolute; }
.app { position: relative; width: 1280px; height: 720px; display: flex; flex-direction: column; filter: blur(.35px); }

.caret { display: inline-block; width: 0; height: 0; border-left: 2.5px solid transparent; border-right: 2.5px solid transparent; border-top: 3px solid #d5d9de; flex: none; }
.push { margin-left: auto; }

/* Title bar */
.titlebar { height: 15px; flex: none; background: #1c2430; display: flex; align-items: center; }
.tb-left { width: 548px; flex: none; display: flex; align-items: center; height: 15px; }
.logo { width: 13px; margin-left: 3px; font: bold 14px/15px "Liberation Sans", sans-serif; color: #e0262c; position: relative; }
.logo-lt { position: absolute; left: 10px; top: -2px; font: normal 4px/8px "Open Sans", sans-serif; color: #e0262c; }
.qat { display: flex; margin-left: 13px; gap: 4px; }
.qat svg { width: 12px; height: 12px; flex: none; }
.undo { width: 12px; height: 12px; margin-left: 3px; }
.undo-caret { margin-left: 5px; border-top-color: #9aa1a9; }
.redo { width: 12px; height: 12px; margin-left: 5px; }
.redo-caret { margin-left: 5px; border-top-color: #59616c; }
.workspace { width: 119px; height: 14px; margin-left: 0; background: #2a3441; display: flex; align-items: center; padding-left: 2px; }
.gear { width: 11px; height: 11px; flex: none; }
.ws-label { margin-left: 1px; color: #d5d9de; }
.ws-caret { margin-left: auto; margin-right: 2px; }
.menu-caret { width: 5px; height: 5px; margin-left: 3px; border-top: 1px solid #d5d9de; border-left: 2.5px solid transparent; border-right: 2.5px solid transparent; }
.share { width: 12px; height: 12px; margin-left: 6px; }
.share-label { margin-left: 2px; }
.app-title { width: 176px; flex: none; white-space: nowrap; color: #d5d9de; font-size: 7.7px; }
.tb-right { flex: 1; display: flex; align-items: center; height: 15px; }
.tri-right { margin-left: 189px; width: 0; height: 0; border-top: 2.5px solid transparent; border-bottom: 2.5px solid transparent; border-left: 3px solid #d5d9de; }
.search { width: 119px; height: 13px; margin-left: 3px; background: #36414f; font-style: italic; font-size: 7.5px; line-height: 13px; padding-left: 2px; color: #b9bfc6; }
.tb-icon { width: 10px; height: 10px; flex: none; }
.search + .tb-icon { margin-left: 3px; }
.user { margin-left: 7px; }
.signin { margin-left: 3px; width: 57px; }
.signin-caret { margin-right: 7px; }
.a360 { margin-right: 6px; }
.tb-sep { width: 1px; height: 12px; background: #39424e; margin-left: 6px; }
.help { width: 11px; height: 11px; border-radius: 50%; background: #d5d9de; color: #1c2430; font: bold 8px/11px "Open Sans", sans-serif; text-align: center; margin-left: 6px; }
.help-caret { margin-left: 5px; }
.win-btns { display: flex; margin-left: 41px; gap: 6px; }
.win-btns svg { width: 11px; height: 11px; }

/* Menu bar */
.menubar { height: 15px; flex: none; background: #1c2430; border-bottom: 1px solid #39424e; display: flex; align-items: center; }
.menu-items { display: flex; gap: 14.6px; padding-left: 10px; flex: 1; line-height: 14px; }
.doc-btns { display: flex; gap: 2px; padding-right: 1px; }
.doc-btns svg { width: 9px; height: 9px; }

/* Ribbon tabs */
.ribbon-tabs { height: 16px; flex: none; background: #1c2430; display: flex; align-items: flex-end; padding-left: 3px; }
.rtab { height: 15px; line-height: 14px; padding: 0 5px; margin-right: 2px; }
.rtab.active { background: #2f3b4a; color: #fff; border-radius: 2px 2px 0 0; margin-right: 3px; }
.mini { width: 10px; height: 6px; background: #e6e9ec; margin: 0 0 5px 9px; }
.mini-caret { margin: 0 0 6px 2px; }

/* Ribbon */
.ribbon { height: 66px; flex: none; background: #2f3b4a; display: flex; }
.panel { flex: none; display: flex; flex-direction: column; padding-top: 3px; border-right: 1px solid #263140; }
.tools { height: 48px; flex: none; display: flex; }
.ptitle { flex: 1; display: flex; align-items: center; justify-content: center; gap: 3px; }
.p-draw { width: 148px; }
.p-modify { width: 156px; padding-left: 4px; }
.p-annot { width: 126px; }
.p-layers { width: 182px; }
.p-block { width: 106px; }
.p-props { width: 179px; }
.p-groups { width: 45px; padding-left: 2px; }
.p-util { width: 65px; }
.p-clip { width: 55px; border-right: 0; }
.p-modify .ptitle { margin-left: -4px; }
.p-groups .ptitle { margin-left: -2px; }

.big { flex: none; display: flex; flex-direction: column; align-items: center; text-align: center; line-height: 10px; white-space: nowrap; }
.big > svg { width: 24px; height: 24px; margin-bottom: 2px; flex: none; }
.big .down { margin-top: 2px; }
.insert > svg { margin-bottom: 1px; }
.glyph-a { height: 26px; font: 30px/26px "Open Sans", sans-serif; color: #e2e6ea; }
.w24 { width: 24px; } .w26 { width: 26px; } .w28 { width: 28px; } .w30 { width: 30px; }
.w32 { width: 32px; } .w36 { width: 36px; } .w38 { width: 38px; } .w42 { width: 42px; }
.w44 { width: 44px; } .w47 { width: 47px; }

.col { flex: none; display: flex; flex-direction: column; }
.row { height: 16px; display: flex; align-items: center; gap: 1px; white-space: nowrap; }
.row > span:not(.caret):not(.swatch):not(.grp-active) { margin-bottom: 2px; }
.ico { width: 14px; height: 14px; flex: none; }
.ico-s { width: 11px; height: 11px; flex: none; }
.c-draw { margin-left: 3px; width: 22px; }
.tight { margin-left: 2px; }
.c-annot { margin-left: 4px; width: 47px; }
.c-layers { width: 137px; }
.c-wheel { width: 14px; margin-left: -2px; }
.c-propcombo { margin-left: 1px; width: 118px; }
.c-grp { margin-left: 0; padding-left: 2px; }
.combo { background: #3c4858; height: 13px; margin-top: 2px; margin-bottom: 1px; padding: 0 2px; }
.layer-combo { gap: 2px; padding-left: 2px; }
.swatch { width: 9px; height: 9px; flex: none; display: inline-block; }
.cyan { background: #19f0f0; }
.white { background: #fff; }
.combo-label { margin-left: 1px; }
.layer-row { gap: 2px; }
.lr-label { margin-left: 0; }
.bl { margin-left: 1px; }
.attr-caret { margin-left: 4px; }
.color-combo { padding-left: 8px; }
.combo-text { margin-left: 6px; }
.grp-active { display: flex; outline: 1px solid #6fa8d0; background: #3a4e60; }

/* Document tabs */
.doc-tabs { height: 21px; flex: none; background: #1c2430; border-bottom: 4px solid #323d4a; display: flex; align-items: flex-end; padding-left: 15px; }
.dtab { height: 16px; display: flex; align-items: center; border-radius: 6px 6px 0 0; }
.start { width: 80px; padding-left: 6px; background: #232c37; }
.current { width: 86px; margin-left: 2px; padding-left: 6px; background: #2f3b4a; color: #fff; font-weight: 700; font-size: 7.5px; }
.dclose { width: 9px; height: 9px; margin-left: 4px; }
.plus { width: 15px; margin-left: 5px; justify-content: center; background: #232c37; font-size: 10px; }

/* Canvas */
.canvas { flex: 1; background: #1f2730; }
.drawing { position: absolute; left: 440px; top: 288px; width: 320px; height: 72px; }
.ucs { position: absolute; left: 10px; top: 620px; width: 60px; height: 50px; }
.ucs svg { position: absolute; left: 0; top: 0; width: 60px; height: 50px; }
.ucs-y { position: absolute; left: 6px; top: -7px; font-size: 10px; line-height: 12px; color: #d8dde2; }
.navbar { position: absolute; left: 1256px; top: 155px; width: 22px; height: 86px; background: #4a535e; border-radius: 2px; }
.navbar svg { width: 22px; height: 86px; display: block; }

/* Command line */
.cmd { position: absolute; left: 260px; top: 656px; width: 761px; height: 18px; display: flex; align-items: center; background: #28313c; }
.cmd-grip { width: 4px; height: 11px; margin-left: 1px; background: repeating-linear-gradient(#aeb4bb 0 1px, transparent 1px 2px); }
.cmd-x { width: 9px; height: 9px; margin-left: 4px; }
.cmd-wrench { width: 11px; height: 11px; margin-left: 6px; }
.cmd-input { width: 725px; height: 16px; margin-left: 4px; background: #c4c5c7; display: flex; align-items: center; padding-left: 3px; }
.cmd-prompt { width: 11px; height: 9px; flex: none; }
.cmd-caret { width: 0; height: 0; margin-left: 1px; border-left: 2.5px solid transparent; border-right: 2.5px solid transparent; border-top: 3px solid #3a424c; }
.cmd-text { margin: 0 0 3px 2px; font-style: italic; font-size: 8px; color: #6d7278; word-spacing: 2px; }
.cmd-up { margin-left: auto; margin-right: 3px; width: 0; height: 0; border-left: 2.5px solid transparent; border-right: 2.5px solid transparent; border-bottom: 3px solid #3a424c; }

/* Status bar */
.statusbar { height: 19px; flex: none; background: #1f2730; border-top: 1px solid #323b47; display: flex; }
.layouts { display: flex; padding-left: 8px; align-items: flex-start; width: 867px; flex: none; }
.ltab { height: 11px; line-height: 10px; padding: 0 7px; margin-right: 1px; background: #222b36; border-radius: 0 0 4px 4px; font-size: 7.6px; }
.ltab.on { background: #323d4b; color: #fff; font-weight: 700; margin-right: 1px; }
.ltab.add { padding: 0 4px; margin-left: 2px; font-size: 10px; }
.status { display: flex; flex: 1; gap: 2px; height: 16px; margin-top: 1px; align-items: stretch; }
.sgroup { background: #333e4c; display: flex; align-items: center; }
.sg-model { width: 31px; justify-content: center; color: #e0e3e7; font-size: 7.8px; }
.sg-draft { width: 175px; padding-left: 1px; }
.sg-annot { width: 69px; gap: 2px; }
.sg-gear { width: 28px; padding-left: 1px; }
.sg-tools { width: 65px; gap: 3px; }
.sg-end { flex: 1; gap: 3px; padding-left: 2px; }
.si { width: 14px; height: 14px; flex: none; padding: 1px; }
.si.on { background: #5b8fc0; width: 15px; height: 15px; }
.s-dots { margin-left: 2px; }
.s-c1 { margin-left: 3.5px; }
.s-snap { margin-left: 5.5px; }
.s-polar { margin-left: 4px; }
.s-c2 { margin-left: 4.5px; }
.s-iso { margin-left: 3.5px; }
.s-c3 { margin-left: 3.5px; }
.s-osn { margin-left: 4.5px; }
.s-trk { margin-left: 1px; }
.s-c4 { margin-left: 2.5px; }
.s-c5 { margin-left: 4.5px; }
.ratio { color: #e0e3e7; margin-left: 3px; }
.deadbar { height: 27px; flex: none; background: #760000; }

/* Colour dropdown */
.dropdown { position: absolute; left: 775px; top: 66px; width: 127px; height: 157px; background: #3c4a5c; border: 1px solid #232b36; box-shadow: 0 0 3px rgba(0,0,0,.5); }
.dd-list { height: 36px; padding-top: 1px; border-bottom: 1px solid #2f3a47; }
.dd-item { height: 15.5px; display: flex; align-items: center; padding-left: 7px; gap: 6px; }
.dd-name { margin-bottom: 2px; }
.dd-item.sel { background: #242d39; }
.big-s { width: 11px; height: 11px; border: 1px solid #5a6472; }
.palette { display: grid; grid-template-columns: repeat(9, 12px); gap: 1.35px; padding: 2px 0 0 2.500px; }
.palette span { height: 12px; border: 1px solid #6f7d90; }
.dd-section { margin-top: 4px; border-top: 1px solid #2f3a47; height: 28px; }
.dd-label { height: 11px; line-height: 9px; padding-left: 4px; }
.palette.index { padding-top: 0; }
.dd-more { margin-top: 0; border-top: 1px solid #2f3a47; height: 17px; display: flex; align-items: center; gap: 1px; padding-left: 4px; }
.dd-more span { margin-bottom: 2px; }
.palette span:nth-child(1) { background: #000; }
.palette span:nth-child(2) { background: #f0c030; }
.palette span:nth-child(3) { background: #c8602a; }
.palette span:nth-child(4) { background: #8b0a1e; }
.palette span:nth-child(5) { background: #5a0f6e; }
.palette span:nth-child(6) { background: #2b2f8c; }
.palette span:nth-child(7) { background: #1c2a70; }
.palette span:nth-child(8) { background: #0e6b33; }
.palette span:nth-child(9) { background: #6f7a2d; }
.palette span:nth-child(10) { background: #666; }
.palette span:nth-child(11) { background: #eeee10; }
.palette span:nth-child(12) { background: #e8602a; }
.palette span:nth-child(13) { background: #c80a28; }
.palette span:nth-child(14) { background: #8a1a9a; }
.palette span:nth-child(15) { background: #4a50b0; }
.palette span:nth-child(16) { background: #0e5a90; }
.palette span:nth-child(17) { background: #18b048; }
.palette span:nth-child(18) { background: #a0a830; }
.palette span:nth-child(19) { background: #a0a0a0; }
.palette span:nth-child(20) { background: #f0f040; }
.palette span:nth-child(21) { background: #f09a2a; }
.palette span:nth-child(22) { background: #e01020; }
.palette span:nth-child(23) { background: #a048a8; }
.palette span:nth-child(24) { background: #6a70b8; }
.palette span:nth-child(25) { background: #2a7ac0; }
.palette span:nth-child(26) { background: #58c858; }
.palette span:nth-child(27) { background: #d0d020; }
.palette span:nth-child(28) { background: #ccc; }
.palette span:nth-child(29) { background: #f8f480; }
.palette span:nth-child(30) { background: #f8c860; }
.palette span:nth-child(31) { background: #ec6070; }
.palette span:nth-child(32) { background: #d090d0; }
.palette span:nth-child(33) { background: #a0a0d8; }
.palette span:nth-child(34) { background: #80b0e0; }
.palette span:nth-child(35) { background: #b8e0b0; }
.palette span:nth-child(36) { background: #e8f080; }
.palette span:nth-child(37) { background: #fff; }
.palette span:nth-child(38) { background: #f8f8b0; }
.palette span:nth-child(39) { background: #fdeebb; }
.palette span:nth-child(40) { background: #f4a8b8; }
.palette span:nth-child(41) { background: #e0b0d8; }
.palette span:nth-child(42) { background: #d0d0ec; }
.palette span:nth-child(43) { background: #b8e0f4; }
.palette span:nth-child(44) { background: #e0f0e0; }
.palette span:nth-child(45) { background: #f0f4a0; }
.index span:nth-child(1) { background: #f00; }
.index span:nth-child(2) { background: #ff0; }
.index span:nth-child(3) { background: #0f0; }
.index span:nth-child(4) { background: #0ff; }
.index span:nth-child(5) { background: #00f; }
.index span:nth-child(6) { background: #f0f; }
.index span:nth-child(7) { background: #fff; }
.index span:nth-child(8) { background: #808080; }
.index span:nth-child(9) { background: #c0c0c0; }

.pointer { position: absolute; left: 809px; top: 79px; width: 22px; height: 22px; }
.pointer svg { width: 22px; height: 22px; display: block; }
```
